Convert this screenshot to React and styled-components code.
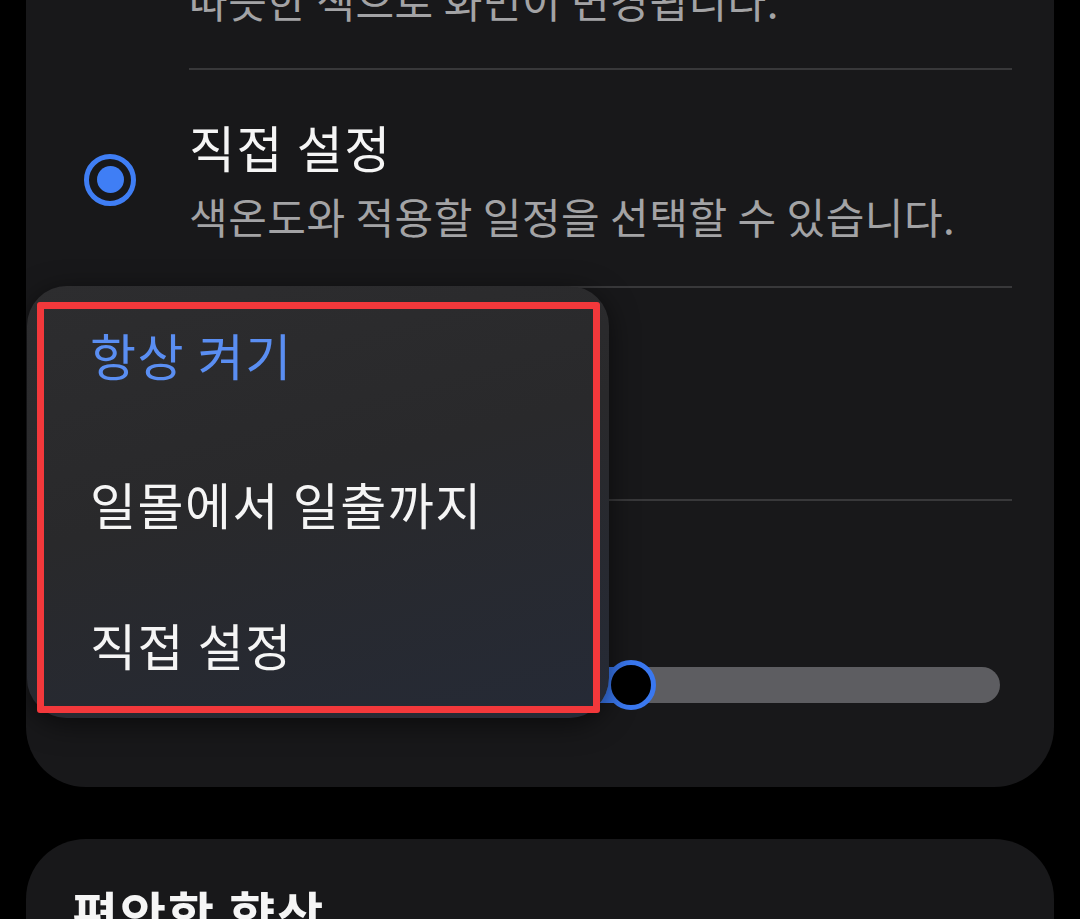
import React from "react";
import styled, { createGlobalStyle } from "styled-components";

const GlobalStyle = createGlobalStyle`
  html, body {
    margin: 0;
    padding: 0;
    background: #000;
  }
  body {
    font-family: "Noto Sans CJK KR", "Noto Sans", sans-serif;
    -webkit-font-smoothing: antialiased;
  }
`;

const Screen = styled.div`
  width: 1080px;
  height: 919px;
  overflow: hidden;
  background: #000;
  padding: 0 26px;
  box-sizing: border-box;
  display: flex;
  flex-direction: column;
  gap: 52px;
`;

const Card = styled.section`
  position: relative;
  flex-shrink: 0;
  background: #18181a;
  border-radius: ${p => (p.$cutTop ? "0 0 60px 60px" : "60px 60px 0 0")};
  padding: ${p => (p.$cutTop ? "0 42px" : "43px 46px")};
`;

const Divider = styled.div`
  height: 2px;
  background: #38383a;
  margin-left: ${p => p.$inset || 0}px;
`;

const OptionRow = styled.div`
  display: grid;
  grid-template-columns: 121px 1fr;
  align-items: center;
  padding: ${p => p.$pad};
  margin-top: ${p => p.$shift || 0}px;
`;

const Radio = styled.span`
  width: 52px;
  height: 52px;
  margin-left: 16px;
  box-sizing: border-box;
  border-radius: 50%;
  border: 5px solid #3f7ef5;
  display: flex;
  align-items: center;
  justify-content: center;
  &::after {
    content: "";
    width: 27px;
    height: 27px;
    border-radius: 50%;
    background: #3f7ef5;
  }
`;

const TextCol = styled.div`
  display: flex;
  flex-direction: column;
  gap: 13px;
`;

const Title = styled.div`
  color: #f5f5f5;
  font-size: 50px;
  line-height: 60px;
  letter-spacing: 1.5px;
  white-space: nowrap;
`;

const Desc = styled.div`
  color: #a3a3a5;
  font-size: 42px;
  line-height: 54px;
  letter-spacing: 0.5px;
  white-space: nowrap;
`;

const ScheduleRow = styled.div`
  height: 211px;
`;

const SliderRow = styled.div`
  height: 286px;
  display: flex;
  align-items: flex-start;
  padding: 166px 12px 0;
  box-sizing: border-box;
`;

const Track = styled.div`
  position: relative;
  flex: 1;
  height: 36px;
  border-radius: 18px;
  background: #5d5d61;
`;

const Fill = styled.div`
  height: 100%;
  border-radius: 18px 0 0 18px;
  background: #3a78f0;
`;

const Thumb = styled.span`
  position: absolute;
  top: 50%;
  width: 50px;
  height: 50px;
  box-sizing: border-box;
  border-radius: 50%;
  background: #000;
  border: 5px solid #3a78f0;
  transform: translate(-50%, -50%);
`;

const Popup = styled.div`
  position: absolute;
  left: 1px;
  top: 286px;
  width: 582px;
  height: 432px;
  box-sizing: border-box;
  padding: 16px 9px 5px 10px;
  border-radius: 40px;
  background: linear-gradient(165deg, #2d2d2f 0%, #29292b 45%, #252a36 100%);
  box-shadow: 0 6px 28px rgba(0, 0, 0, 0.55);
  display: flex;
`;

const Marker = styled.div`
  flex: 1;
  border: 7px solid #f2383b;
  border-radius: 3px;
  padding: 15px 0 0 46px;
  display: flex;
  flex-direction: column;
`;

const MenuItem = styled.div`
  font-size: 50px;
  line-height: 60px;
  height: 60px;
  letter-spacing: 1.5px;
  white-space: nowrap;
  margin-bottom: ${p => p.$after || 0}px;
  color: ${p => (p.$active ? "#5a8ef2" : "#f5f5f5")};
`;

const SectionTitle = styled.h2`
  margin: 0;
  color: #f5f5f5;
  font-size: 50px;
  line-height: 60px;
  letter-spacing: 2px;
  font-weight: 700;
`;

export default function App() {
  const value = 0.599;
  return (
    <Screen>
      <GlobalStyle />
      <Card $cutTop>
        <OptionRow $pad="0 0 41px" $shift={-27}>
          <span />
          <Desc>따뜻한 색으로 화면이 변경됩니다.</Desc>
        </OptionRow>
        <Divider $inset={121} />
        <OptionRow $pad="46px 0 43px">
          <Radio />
          <TextCol>
            <Title>직접 설정</Title>
            <Desc>색온도와 적용할 일정을 선택할 수 있습니다.</Desc>
          </TextCol>
        </OptionRow>
        <Divider />
        <ScheduleRow />
        <Divider />
        <SliderRow>
          <Track>
            <Fill style={{ width: `${value * 100}%` }} />
            <Thumb style={{ left: `${value * 100}%` }} />
          </Track>
        </SliderRow>
        <Popup>
          <Marker>
            <MenuItem $active $after={89}>항상 켜기</MenuItem>
            <MenuItem $after={81}>일몰에서 일출까지</MenuItem>
            <MenuItem>직접 설정</MenuItem>
          </Marker>
        </Popup>
      </Card>
      <Card>
        <SectionTitle>편안함 향상</SectionTitle>
      </Card>
    </Screen>
  );
}
